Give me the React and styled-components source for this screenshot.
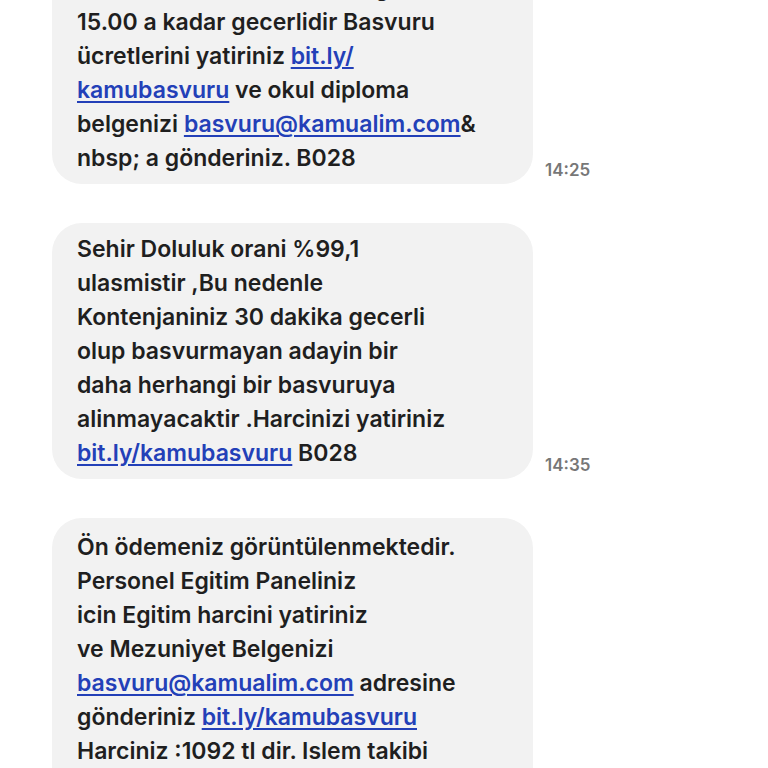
import React from "react";
import styled, { createGlobalStyle } from "styled-components";

const Global = createGlobalStyle`
  html, body { margin: 0; padding: 0; background: #ffffff; }
  body { font-family: Inter, "Noto Sans", sans-serif; overflow: hidden; }
`;

const Page = styled.div`
  width: 768px;
  height: 768px;
  overflow: hidden;
  background: #ffffff;
`;

const MessageList = styled.div`
  display: flex;
  flex-direction: column;
  gap: 39px;
  margin-top: -38px;
  padding-left: 52px;
`;

const Row = styled.div`
  display: flex;
  align-items: flex-end;
`;

const Bubble = styled.div`
  width: 481px;
  box-sizing: border-box;
  background: #f2f2f2;
  border-radius: 30px;
  padding: ${(p) => p.$pt || 9}px 20px 9px 25px;
  color: #1f1f1f;
  font-family: Inter, "Noto Sans", sans-serif;
  font-size: 23px;
  font-weight: 600;
  line-height: 34px;
  white-space: nowrap;
`;

const Line = styled.div``;

const Link = styled.a`
  color: #2340b8;
  text-decoration: underline;
  text-underline-offset: 3px;
  text-decoration-thickness: 2px;
`;

const Time = styled.span`
  margin-left: 12px;
  margin-bottom: 4px;
  color: #777777;
  font-family: Inter, "Noto Sans", sans-serif;
  font-size: 17px;
  font-weight: 600;
  line-height: 20px;
`;

export default function App() {
  return (
    <Page>
      <Global />
      <MessageList>
        <Row>
          <Bubble>
            <Line>Son basvuru tarihi 15 Ekim günü</Line>
            <Line>15.00 a kadar gecerlidir Basvuru</Line>
            <Line>
              ücretlerini yatiriniz <Link href="#">bit.ly/</Link>
            </Line>
            <Line>
              <Link href="#">kamubasvuru</Link> ve okul diploma
            </Line>
            <Line>
              belgenizi <Link href="#">basvuru@kamualim.com</Link>&amp;
            </Line>
            <Line>nbsp; a gönderiniz. B028</Line>
          </Bubble>
          <Time>14:25</Time>
        </Row>
        <Row>
          <Bubble>
            <Line>Sehir Doluluk orani %99,1</Line>
            <Line>ulasmistir ,Bu nedenle</Line>
            <Line>Kontenjaniniz 30 dakika gecerli</Line>
            <Line>olup basvurmayan adayin bir</Line>
            <Line>daha herhangi bir basvuruya</Line>
            <Line>alinmayacaktir .Harcinizi yatiriniz</Line>
            <Line>
              <Link href="#">bit.ly/kamubasvuru</Link> B028
            </Line>
          </Bubble>
          <Time>14:35</Time>
        </Row>
        <Row>
          <Bubble $pt={12}>
            <Line>Ön ödemeniz görüntülenmektedir.</Line>
            <Line>Personel Egitim Paneliniz</Line>
            <Line>icin Egitim harcini yatiriniz</Line>
            <Line>ve Mezuniyet Belgenizi</Line>
            <Line>
              <Link href="#">basvuru@kamualim.com</Link> adresine
            </Line>
            <Line>
              gönderiniz <Link href="#">bit.ly/kamubasvuru</Link>
            </Line>
            <Line>Harciniz :1092 tl dir. Islem takibi</Line>
            <Line>icin basvuru numaranizi saklayiniz</Line>
          </Bubble>
          <Time>14:45</Time>
        </Row>
      </MessageList>
    </Page>
  );
}
